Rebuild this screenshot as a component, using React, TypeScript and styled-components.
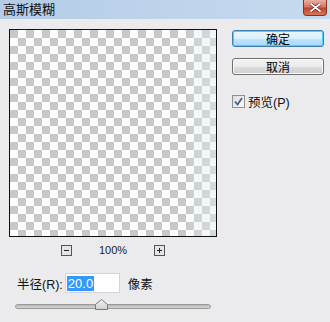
import React from "react";
import styled, { createGlobalStyle } from "styled-components";

const GlobalStyle = createGlobalStyle`
  html, body {
    margin: 0;
    padding: 0;
    background: #ebebee;
  }
  body {
    font-family: "Liberation Sans", "Noto Sans CJK SC", sans-serif;
    color: #111;
  }
`;

const Dialog = styled.div`
  width: 330px;
  height: 322px;
  background: #ebebee;
  display: flex;
  flex-direction: column;
  overflow: hidden;
`;

const TitleBar = styled.div`
  height: 19px;
  display: flex;
  align-items: flex-start;
  justify-content: space-between;
  background: linear-gradient(to right, #b4cce6, #bfd5ec 60%, #c7daee);
  padding-left: 3px;
  padding-right: 3px;
`;

const TitleText = styled.div`
  font-family: "Noto Sans CJK SC", sans-serif;
  font-size: 13px;
  line-height: 18px;
  color: #111;
`;

const CloseButton = styled.div`
  width: 24px;
  height: 16px;
  box-sizing: border-box;
  border: 1px solid #8a3022;
  border-top: none;
  border-radius: 0 0 4px 4px;
  background: linear-gradient(#eab1a2, #d7735d 45%, #c2432b 55%, #d9765c);
  display: flex;
  align-items: center;
  justify-content: center;
`;

const Body = styled.div`
  display: flex;
  padding: 10px 0 0 9px;
`;

const LeftColumn = styled.div`
  width: 208px;
  display: flex;
  flex-direction: column;
`;

const Preview = styled.div`
  width: 208px;
  height: 208px;
  box-sizing: border-box;
  border: 1px solid #111;
  background:
    linear-gradient(to right, rgba(230, 240, 246, 0) 86%, rgba(222, 234, 242, 0.35) 91%, rgba(226, 236, 242, 0.5)),
    repeating-conic-gradient(#ffffff 0 25%, #c8c8c8 0 50%) 0 0 / 16px 16px;
`;

const ZoomRow = styled.div`
  display: flex;
  align-items: center;
  justify-content: center;
  gap: 27px;
  margin-top: 8px;
  height: 11px;
`;

const ZoomText = styled.span`
  font-size: 11px;
  line-height: 11px;
  color: #222;
`;

const RadiusRow = styled.div`
  display: flex;
  align-items: center;
  margin-top: 17px;
  padding-left: 8px;
  height: 20px;
`;

const Label = styled.span`
  font-family: "Liberation Sans", "Noto Sans CJK SC", sans-serif;
  font-size: 12.5px;
  color: #111;
`;

const Input = styled.div`
  width: 55px;
  height: 20px;
  box-sizing: border-box;
  margin-left: 2px;
  margin-right: 8px;
  border: 1px solid #d4d4d8;
  background: #fff;
  display: flex;
  align-items: center;
  padding-left: 1px;
`;

const Selected = styled.span`
  background: #3399ff;
  color: #fff;
  font-size: 13px;
  line-height: 15px;
  padding: 0 1px;
`;

const SliderRow = styled.div`
  position: relative;
  margin-top: 6px;
  margin-left: 6px;
  width: 196px;
  height: 12px;
`;

const Track = styled.div`
  position: absolute;
  left: 0;
  right: 0;
  top: 5px;
  height: 5px;
  box-sizing: border-box;
  border: 1px solid #999;
  border-radius: 3px;
  background: linear-gradient(#b7b7b7, #d6d6d6);
`;

const Thumb = styled.svg`
  position: absolute;
  top: 0;
  left: 80px;
`;

const RightColumn = styled.div`
  display: flex;
  flex-direction: column;
  margin-left: 15px;
  padding-top: 1px;
`;

const Button = styled.div<{ $primary?: boolean }>`
  width: 92px;
  height: 17px;
  box-sizing: border-box;
  border-radius: 3px;
  border: 1px solid ${(p) => (p.$primary ? "#3c7fb1" : "#707070")};
  box-shadow: ${(p) => (p.$primary ? "inset 0 0 0 1px #48d1fd" : "inset 0 0 0 1px #fafafa")};
  background: ${(p) =>
    p.$primary
      ? "linear-gradient(#eaf6fd, #d9f0fc 50%, #bee6fd 50%, #a7d9f5)"
      : "linear-gradient(#f2f2f2, #ebebeb 50%, #dddddd 50%, #cfcfcf)"};
  display: flex;
  align-items: center;
  justify-content: center;
  font-family: "Noto Sans CJK SC", sans-serif;
  font-size: 12px;
  line-height: 15px;
  color: #000;
  & + & {
    margin-top: 11px;
  }
`;

const CheckRow = styled.div`
  display: flex;
  align-items: center;
  margin-top: 17px;
  gap: 3px;
`;

const CheckBox = styled.div`
  width: 13px;
  height: 13px;
  box-sizing: border-box;
  border: 1px solid #8e8f8f;
  background: linear-gradient(135deg, #dcdcdc, #fafafa);
  display: flex;
  align-items: center;
  justify-content: center;
`;

function ZoomBox({ plus }: { plus?: boolean }) {
  return (
    <svg width="11" height="11" viewBox="0 0 11 11">
      <rect x="0.5" y="0.5" width="10" height="10" fill="#e4e4e6" stroke="#555" />
      <line x1="3" y1="5.5" x2="8" y2="5.5" stroke="#222" />
      {plus && <line x1="5.5" y1="3" x2="5.5" y2="8" stroke="#222" />}
    </svg>
  );
}

export default function App() {
  return (
    <>
      <GlobalStyle />
      <Dialog>
        <TitleBar>
          <TitleText>高斯模糊</TitleText>
          <CloseButton>
            <svg width="11" height="9" viewBox="0 0 11 9">
              <path d="M1 1 L10 8 M10 1 L1 8" stroke="#5a1a10" strokeWidth="3" strokeLinecap="round" />
              <path d="M1 1 L10 8 M10 1 L1 8" stroke="#fff" strokeWidth="1.8" strokeLinecap="round" />
            </svg>
          </CloseButton>
        </TitleBar>
        <Body>
          <LeftColumn>
            <Preview />
            <ZoomRow>
              <ZoomBox />
              <ZoomText>100%</ZoomText>
              <ZoomBox plus />
            </ZoomRow>
            <RadiusRow>
              <Label>半径(R):</Label>
              <Input>
                <Selected>20.0</Selected>
              </Input>
              <Label>像素</Label>
            </RadiusRow>
            <SliderRow>
              <Track />
              <Thumb width="13" height="11" viewBox="0 0 13 11">
                <defs>
                  <linearGradient id="tg" x1="0" y1="0" x2="0" y2="1">
                    <stop offset="0" stopColor="#f4f4f4" />
                    <stop offset="1" stopColor="#cfcfcf" />
                  </linearGradient>
                </defs>
                <path d="M0.5 10.5 V5.5 L6.5 0.5 L12.5 5.5 V10.5 Z" fill="url(#tg)" stroke="#7a7a7a" />
              </Thumb>
            </SliderRow>
          </LeftColumn>
          <RightColumn>
            <Button $primary>确定</Button>
            <Button>取消</Button>
            <CheckRow>
              <CheckBox>
                <svg width="9" height="9" viewBox="0 0 9 9">
                  <path d="M1 4.5 L3.5 7.5 L8 1" stroke="#4a5fa0" strokeWidth="1.8" fill="none" />
                </svg>
              </CheckBox>
              <Label>预览(P)</Label>
            </CheckRow>
          </RightColumn>
        </Body>
      </Dialog>
    </>
  );
}
